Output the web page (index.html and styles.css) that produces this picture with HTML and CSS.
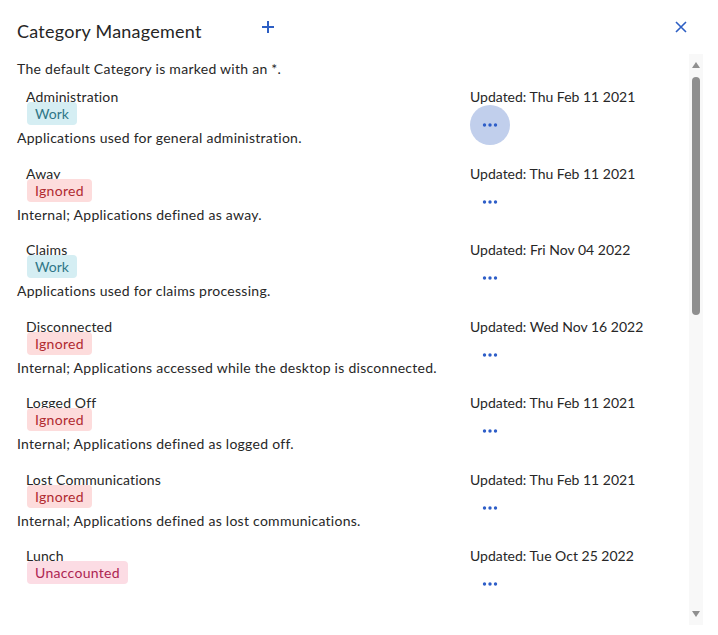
FILE: index.html
```html
<!DOCTYPE html>
<html>
<head>
<meta charset="utf-8">
<link rel="stylesheet" href="styles.css">
</head>
<body>
<div class="dialog">
  <div class="header">
    <h1 class="title">Category Management</h1>
    <button class="add-btn" aria-label="Add">
      <svg width="12" height="12" viewBox="0 0 12 12"><path d="M6 0V12M0 6H12" stroke="#2d5fc4" stroke-width="2"/></svg>
    </button>
    <div class="spacer"></div>
    <button class="close-btn" aria-label="Close">
      <svg width="12" height="12" viewBox="0 0 12 12"><path d="M1 1L11 11M11 1L1 11" stroke="#2d5fc4" stroke-width="1.6"/></svg>
    </button>
  </div>
  <div class="body">
    <div class="list">
      <p class="intro">The default Category is marked with an *.</p>

      <div class="item">
        <div class="left">
          <div class="name">Administration</div>
          <span class="badge work">Work</span>
          <div class="desc">Applications used for general administration.</div>
        </div>
        <div class="right">
          <div class="updated">Updated: Thu Feb 11 2021</div>
          <button class="more active" aria-label="More"><svg width="16" height="4" viewBox="0 0 16 4"><circle cx="2.5" cy="2" r="1.7"/><circle cx="8" cy="2" r="1.7"/><circle cx="13.5" cy="2" r="1.7"/></svg></button>
        </div>
      </div>

      <div class="item">
        <div class="left">
          <div class="name">Away</div>
          <span class="badge ignored">Ignored</span>
          <div class="desc">Internal; Applications defined as away.</div>
        </div>
        <div class="right">
          <div class="updated">Updated: Thu Feb 11 2021</div>
          <button class="more" aria-label="More"><svg width="16" height="4" viewBox="0 0 16 4"><circle cx="2.5" cy="2" r="1.7"/><circle cx="8" cy="2" r="1.7"/><circle cx="13.5" cy="2" r="1.7"/></svg></button>
        </div>
      </div>

      <div class="item">
        <div class="left">
          <div class="name">Claims</div>
          <span class="badge work">Work</span>
          <div class="desc">Applications used for claims processing.</div>
        </div>
        <div class="right">
          <div class="updated">Updated: Fri Nov 04 2022</div>
          <button class="more" aria-label="More"><svg width="16" height="4" viewBox="0 0 16 4"><circle cx="2.5" cy="2" r="1.7"/><circle cx="8" cy="2" r="1.7"/><circle cx="13.5" cy="2" r="1.7"/></svg></button>
        </div>
      </div>

      <div class="item">
        <div class="left">
          <div class="name">Disconnected</div>
          <span class="badge ignored">Ignored</span>
          <div class="desc">Internal; Applications accessed while the desktop is disconnected.</div>
        </div>
        <div class="right">
          <div class="updated">Updated: Wed Nov 16 2022</div>
          <button class="more" aria-label="More"><svg width="16" height="4" viewBox="0 0 16 4"><circle cx="2.5" cy="2" r="1.7"/><circle cx="8" cy="2" r="1.7"/><circle cx="13.5" cy="2" r="1.7"/></svg></button>
        </div>
      </div>

      <div class="item">
        <div class="left">
          <div class="name">Logged Off</div>
          <span class="badge ignored">Ignored</span>
          <div class="desc">Internal; Applications defined as logged off.</div>
        </div>
        <div class="right">
          <div class="updated">Updated: Thu Feb 11 2021</div>
          <button class="more" aria-label="More"><svg width="16" height="4" viewBox="0 0 16 4"><circle cx="2.5" cy="2" r="1.7"/><circle cx="8" cy="2" r="1.7"/><circle cx="13.5" cy="2" r="1.7"/></svg></button>
        </div>
      </div>

      <div class="item">
        <div class="left">
          <div class="name">Lost Communications</div>
          <span class="badge ignored">Ignored</span>
          <div class="desc">Internal; Applications defined as lost communications.</div>
        </div>
        <div class="right">
          <div class="updated">Updated: Thu Feb 11 2021</div>
          <button class="more" aria-label="More"><svg width="16" height="4" viewBox="0 0 16 4"><circle cx="2.5" cy="2" r="1.7"/><circle cx="8" cy="2" r="1.7"/><circle cx="13.5" cy="2" r="1.7"/></svg></button>
        </div>
      </div>

      <div class="item">
        <div class="left">
          <div class="name">Lunch</div>
          <span class="badge unaccounted">Unaccounted</span>
          <div class="desc"></div>
        </div>
        <div class="right">
          <div class="updated">Updated: Tue Oct 25 2022</div>
          <button class="more" aria-label="More"><svg width="16" height="4" viewBox="0 0 16 4"><circle cx="2.5" cy="2" r="1.7"/><circle cx="8" cy="2" r="1.7"/><circle cx="13.5" cy="2" r="1.7"/></svg></button>
        </div>
      </div>
    </div>
    <div class="scrollbar">
      <div class="arrow up"></div>
      <div class="track"><div class="thumb"></div></div>
      <div class="arrow down"></div>
    </div>
  </div>
</div>
</body>
</html>
```

FILE: styles.css
```css
* { box-sizing: border-box; }
html, body { margin: 0; padding: 0; background: #fff; }
body {
  font-family: "Lato", "Open Sans", sans-serif;
  color: #272727;
  font-size: 14px;
}
.dialog {
  width: 718px;
  height: 635px;
  display: flex;
  flex-direction: column;
  overflow: hidden;
}
.header {
  display: flex;
  align-items: flex-start;
  padding: 19px 31px 0 17px;
  height: 54px;
}
.title {
  margin: 0;
  font-size: 18px;
  font-weight: 400;
  line-height: 24px;
  letter-spacing: 0.25px;
  color: #262626;
}
.add-btn, .close-btn {
  border: 0;
  background: none;
  padding: 0;
  width: 12px;
  height: 12px;
  display: flex;
  margin-top: 2px;
}
.add-btn { margin-left: 60px; }
.spacer { flex: 1; }
.body {
  flex: 1;
  display: flex;
  min-height: 0;
  padding-right: 15px;
  padding-bottom: 10px;
}
.list {
  flex: 1;
  overflow: hidden;
  padding-left: 17px;
  padding-top: 5px;
}
.intro {
  margin: 0 0 9px 0;
  line-height: 20px;
  letter-spacing: 0.27px;
}
.item {
  display: grid;
  grid-template-columns: 453px 1fr;
  margin-bottom: 16.5px;
}
.name {
  padding-left: 9px;
  line-height: 18px;
  height: 14px;
  letter-spacing: 0.15px;
}
.badge {
  display: inline-block;
  margin-left: 10px;
  height: 23px;
  line-height: 23px;
  padding: 0 8px;
  border-radius: 4px;
  letter-spacing: 0.3px;
  position: relative;
}
.badge.work { background: #d5eef3; color: #2f7687; letter-spacing: 0; }
.badge.ignored { background: #fddcdc; color: #b02a30; }
.badge.unaccounted { background: #fcdce4; color: #ad2552; }
.desc {
  margin-top: 3px;
  line-height: 20px;
  min-height: 20px;
  letter-spacing: 0.27px;
}
.updated {
  line-height: 18px;
  height: 14px;
}
.more {
  margin-top: 3px;
  width: 40px;
  height: 40px;
  border-radius: 50%;
  border: 0;
  padding: 0;
  background: transparent;
  display: flex;
  align-items: center;
  justify-content: center;
  fill: #2e5ec8;
}
.more.active { background: #c1cfec; }
.scrollbar {
  width: 14px;
  background: #f8f8f8;
  display: flex;
  flex-direction: column;
  align-items: center;
}
.arrow {
  width: 0;
  height: 0;
  border-left: 4.5px solid transparent;
  border-right: 4.5px solid transparent;
  margin: 8px 0;
}
.arrow.up { border-bottom: 6px solid #8f8f8f; }
.arrow.down { border-top: 6px solid #8f8f8f; }
.track {
  flex: 1;
  width: 100%;
  display: flex;
  justify-content: center;
}
.thumb {
  width: 8px;
  height: 238px;
  margin-top: 1px;
  background: #8f8f8f;
  border-radius: 4px;
}
```
